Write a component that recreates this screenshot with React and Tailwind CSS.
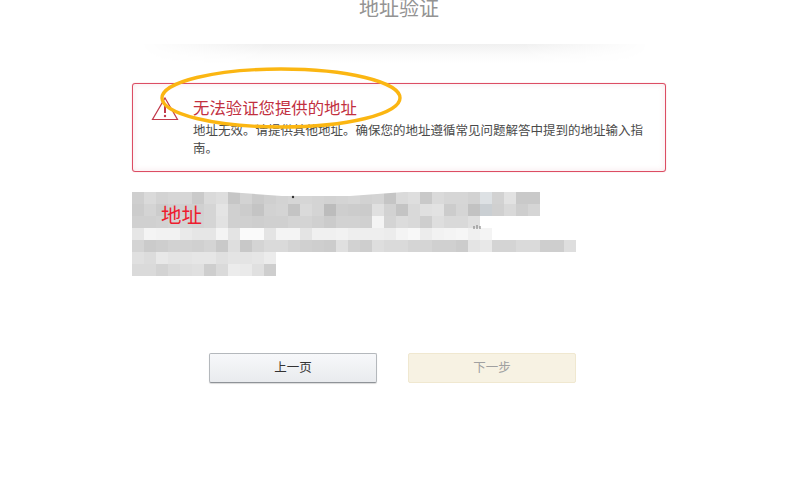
const cjk = "font-['Liberation_Sans','Noto_Sans_CJK_SC',sans-serif]";

// mosaic greys, one row per line, 12px cells
const mosaic = [
  ["cf", "da", "d3", "d6", "d6", "ca", "da", "de", "c6", "d3", "ca", "cf", "d3", "d6", "d6", "d4", "d2", "d4", "d6", "d2", "d4", "c5", "da", "de", "c9", "da", "d6", "d6", "d2", "dde1e4", "d2", "e2", "c9", "c9"],
  ["cc", "d4", "cc", "d0", "d0", "d0", "d5", "e4", "d0", "cc", "c4", "d2", "d4", "c4", "da", "d4", "bc", "ce", "cc", "cb", "e0", "d2", "c4", "d9", "e0", "e2", "cc", "d5", "c2", "cacfd3", "d0", "d9", "ce", "d5"],
  ["d0", "d0", "d2", "d4", "d4", "d2", "d5", "e2", "d0", "d0", "ce", "d0", "d0", "d4", "d4", "d0", "cb", "d2", "d2", "d0", "f4", "d4", "dc", "d9", "ce", "de", "d9", "d9", "e0"],
  ["e6", "f4", "f2", "f2", "ea", "e6", "e6", "f4", "e4", "fa", "fa", "e4", "f4", "f4", "e4", "f0", "f0", "f2", "ee", "ee", "ee", "ec", "f4", "f8", "ec", "f2", "f4", "f6", "f0", "f4"],
  ["d4", "cb", "ce", "d2", "d2", "d0", "d4", "c9", "de", "c8", "d4", "da", "da", "d4", "d0", "ce", "cc", "e0", "d2", "ce", "de", "da", "da", "d5", "d5", "d0", "d0", "cc", "e4", "e8", "d4", "d4", "da", "da", "ce", "ce", "de"],
  ["e0", "dc", "e8", "e4", "e4", "e6", "e6", "e0", "e4", "e4", "e6", "ec"],
  ["da", "da", "d3", "da", "de", "e0", "ce", "da", "ec", "ea", "e0", "ce"],
];

function Alert() {
  return (
    <div className="relative mt-[39px] h-[89px] w-[534px] rounded-[3px] border border-[#dc4d63] bg-white pl-[60px] pr-[20px] shadow-[inset_0_0_6px_rgba(200,60,80,0.12),0_0_1px_rgba(220,77,99,0.6)]">
      <svg className="absolute left-[18px] top-[12px]" width="28" height="26" viewBox="0 0 28 26">
        <path d="M14 2 L26.5 23.5 L1.5 23.5 Z" fill="none" stroke="#c0394a" strokeWidth="1.2" />
        <path d="M14 8.5 L14 17" stroke="#c0394a" strokeWidth="2" />
        <circle cx="14" cy="20" r="1.2" fill="#c0394a" />
      </svg>
      <h4 className="mt-[14px] text-[16.4px] leading-[20px] text-[#c2303f]">无法验证您提供的地址</h4>
      <p className="mt-[4px] text-[12.5px] leading-[18px] text-[#4a4a4a]">
        地址无效。请提供其他地址。确保您的地址遵循常见问题解答中提到的地址输入指南。
      </p>
      <svg className="absolute left-[26px] top-[-18px]" width="244" height="64" viewBox="0 0 244 64">
        <ellipse cx="122" cy="32" rx="119" ry="29" fill="none" stroke="#fbb612" strokeWidth="3.4" />
      </svg>
    </div>
  );
}

function Mosaic() {
  return (
    <div className="relative mt-[20px] h-[84px] w-[444px]">
      {mosaic.map((row, i) => (
        <div key={i} className="flex h-[12px]">
          {row.map((c, j) => {
            const hex = c.length === 2 ? c + c + c : c;
            return <div key={j} className="h-[12px] w-[12px] shrink-0" style={{ backgroundColor: "#" + hex }} />;
          })}
        </div>
      ))}
      {/* torn top edge and stray marks left by the blur */}
      <svg className="absolute left-0 top-0" width="444" height="40" viewBox="0 0 444 40">
        <path d="M96 0 L150 4 L218 4 L272 0 Z" fill="#ffffff" />
        <circle cx="161" cy="5" r="1.2" fill="#333333" />
        <path d="M342 34 v3 M345 33 v4 M348 34 v3" stroke="#777777" strokeWidth="1" />
      </svg>
      <span className="absolute left-[29px] top-[10px] text-[20.5px] leading-[28px] text-[#ee1c2e]">地址</span>
    </div>
  );
}

export default function App() {
  return (
    <div className={`h-[495px] w-[800px] overflow-hidden bg-white ${cjk}`}>
      <div className="flex h-[44px] flex-col">
        <h1 className="mr-[2px] h-[18px] text-center text-[20px] leading-[18px] text-[#939393]">地址验证</h1>
      </div>
      <div className="mx-[140px] h-[20px] w-[510px] bg-gradient-to-b from-[#f0f0f0] via-[#fafafa] to-white [mask-image:linear-gradient(to_right,transparent,black_25%,black_75%,transparent)]" />
      <div className="ml-[132px] flex flex-col">
        <div className="mt-[-20px]">
          <Alert />
        </div>
        <Mosaic />
        <div className="ml-[77px] mt-[77px] flex gap-[31px]">
          <button className="h-[30px] w-[168px] rounded-[2px] border border-[#b4b8bc] border-b-[#8f9398] bg-gradient-to-b from-[#f7f8fa] to-[#e9ebee] text-[12.5px] text-[#333333] shadow-[0_1px_1px_rgba(0,0,0,0.15)]">
            上一页
          </button>
          <button className="h-[30px] w-[168px] rounded-[2px] border border-[#f0e8d0] bg-[#f7f2e3] text-[12.5px] text-[#a0a0a0]">
            下一步
          </button>
        </div>
      </div>
    </div>
  );
}
